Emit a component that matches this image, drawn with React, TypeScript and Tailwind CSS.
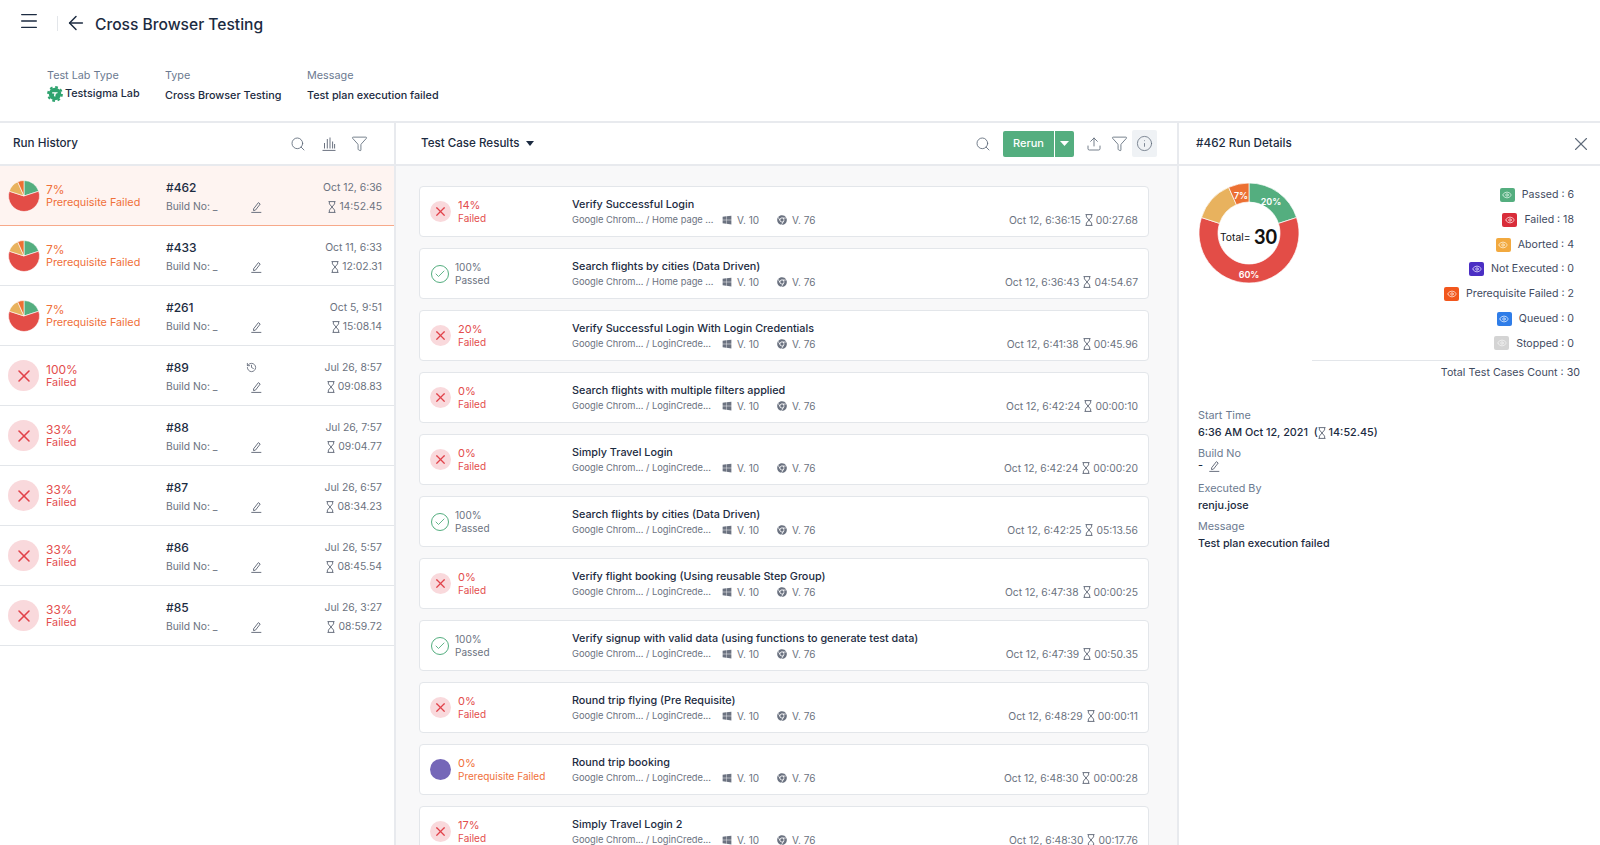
import { ArrowLeft, Eye, Filter, History, Info, Menu, Search, Upload, X, Check } from "lucide-react"
import { FaChrome, FaWindows } from "react-icons/fa"

type Slice = { from: number, to: number, color: string }

const slices: Slice[] = [
    { from: 0, to: 72, color: "#54ae7f" },
    { from: 72, to: 288, color: "#e34d47" },
    { from: 288, to: 336, color: "#e8b25e" },
    { from: 336, to: 360, color: "#ec7032" },
]

function point(cx: number, cy: number, r: number, deg: number) {
    const a = (deg - 90) * Math.PI / 180
    return `${(cx + r * Math.cos(a)).toFixed(2)} ${(cy + r * Math.sin(a)).toFixed(2)}`
}

function Pie() {
    return (
        <svg width="32" height="32" viewBox="0 0 32 32" className="shrink-0">
            {slices.map((s) => (
                <path key={s.from} fill={s.color} stroke="#fff" strokeWidth="0.6"
                    d={`M16 16 L${point(16, 16, 15.5, s.from)} A15.5 15.5 0 ${s.to - s.from > 180 ? 1 : 0} 1 ${point(16, 16, 15.5, s.to)} Z`} />
            ))}
        </svg>
    )
}

function Donut() {
    const arc = (s: Slice) => {
        const big = s.to - s.from > 180 ? 1 : 0
        return `M${point(51, 51, 50, s.from)} A50 50 0 ${big} 1 ${point(51, 51, 50, s.to)} L${point(51, 51, 31, s.to)} A31 31 0 ${big} 0 ${point(51, 51, 31, s.from)} Z`
    }
    return (
        <svg width="102" height="102" viewBox="0 0 102 102" className="shrink-0">
            {slices.map((s) => <path key={s.from} d={arc(s)} fill={s.color} stroke="#fff" strokeWidth="0.7" />)}
            <g fontFamily="Inter, sans-serif" fontSize="9" fontWeight="600" fill="#fff" textAnchor="middle">
                <text x="73" y="23">20%</text>
                <text x="51" y="96">60%</text>
                <text x="43" y="17">7%</text>
            </g>
            <text x="22" y="59" fontFamily="Inter, sans-serif" fontSize="10.3" fill="#111">Total=</text>
            <text x="56" y="62" fontFamily="Lato, sans-serif" fontSize="20" fontWeight="700" fill="#111">30</text>
        </svg>
    )
}

function Hourglass({ className = "text-[#6b7280]" }: { className?: string }) {
    return (
        <svg width="8" height="12" viewBox="0 0 8 12" fill="none" stroke="currentColor" strokeWidth="1" className={`shrink-0 ${className}`}>
            <path d="M.5.6h7M.5 11.4h7M1.4.6v2.3L4 6l2.6-3.1V.6M1.4 11.4V9.1L4 6l2.6 3.1v2.3" />
        </svg>
    )
}

function Pencil() {
    return (
        <svg width="11" height="12" viewBox="0 0 11 12" fill="none" stroke="#6b7280" strokeWidth="1" className="shrink-0">
            <path d="M2.6 7.8 7.4 1.6l1.8 1.4-4.7 6.1-2 .5z" />
            <path d="M.3 11.4h10" />
        </svg>
    )
}

function LogoGear() {
    return (
        <svg width="16" height="16" viewBox="0 0 16 16" className="shrink-0">
            <circle cx="8" cy="8" r="6.2" fill="#2fa36f" />
            <circle cx="8" cy="8" r="6.9" fill="none" stroke="#2fa36f" strokeWidth="2" strokeDasharray="2.71 2.71" />
            <path fill="#fff" d="M5.2 6.2h5.6l-.7 1.4H8.9L8.1 11 6.9 9.7l.5-2.1H5.2z" />
        </svg>
    )
}

function BarsIcon() {
    return (
        <svg width="14" height="14" viewBox="0 0 14 14" fill="none" stroke="#6b7280" strokeWidth="1">
            <path d="M.5 13.4h13M2.5 11.5V6M5.3 11.5V2M8 11.5V.5M10.6 11.5V4.5M12.6 11.5V7" />
        </svg>
    )
}

function Failed({ size, icon }: { size: string, icon: number }) {
    return (
        <div className={`${size} shrink-0 rounded-full bg-[#f9d9dc] flex items-center justify-center`}>
            <X size={icon} strokeWidth={1.9} className="text-[#e1424a]" />
        </div>
    )
}

type Run = { pct: string, status: "pre" | "fail", id: string, date: string, time: string, restored?: boolean }

const runs: Run[] = [
    { pct: "7%", status: "pre", id: "#462", date: "Oct 12, 6:36", time: "14:52.45" },
    { pct: "7%", status: "pre", id: "#433", date: "Oct 11, 6:33", time: "12:02.31" },
    { pct: "7%", status: "pre", id: "#261", date: "Oct 5, 9:51", time: "15:08.14" },
    { pct: "100%", status: "fail", id: "#89", date: "Jul 26, 8:57", time: "09:08.83", restored: true },
    { pct: "33%", status: "fail", id: "#88", date: "Jul 26, 7:57", time: "09:04.77" },
    { pct: "33%", status: "fail", id: "#87", date: "Jul 26, 6:57", time: "08:34.23" },
    { pct: "33%", status: "fail", id: "#86", date: "Jul 26, 5:57", time: "08:45.54" },
    { pct: "33%", status: "fail", id: "#85", date: "Jul 26, 3:27", time: "08:59.72" },
]

type Case = { pct: string, status: "fail" | "pass" | "pre", title: string, page: string, date: string, time: string }

const cases: Case[] = [
    { pct: "14%", status: "fail", title: "Verify Successful Login", page: "Home page ...", date: "Oct 12, 6:36:15", time: "00:27.68" },
    { pct: "100%", status: "pass", title: "Search flights by cities (Data Driven)", page: "Home page ...", date: "Oct 12, 6:36:43", time: "04:54.67" },
    { pct: "20%", status: "fail", title: "Verify Successful Login With Login Credentials", page: "LoginCrede...", date: "Oct 12, 6:41:38", time: "00:45.96" },
    { pct: "0%", status: "fail", title: "Search flights with multiple filters applied", page: "LoginCrede...", date: "Oct 12, 6:42:24", time: "00:00:10" },
    { pct: "0%", status: "fail", title: "Simply Travel Login", page: "LoginCrede...", date: "Oct 12, 6:42:24", time: "00:00:20" },
    { pct: "100%", status: "pass", title: "Search flights by cities (Data Driven)", page: "LoginCrede...", date: "Oct 12, 6:42:25", time: "05:13.56" },
    { pct: "0%", status: "fail", title: "Verify flight booking (Using reusable Step Group)", page: "LoginCrede...", date: "Oct 12, 6:47:38", time: "00:00:25" },
    { pct: "100%", status: "pass", title: "Verify signup with valid data (using functions to generate test data)", page: "LoginCrede...", date: "Oct 12, 6:47:39", time: "00:50.35" },
    { pct: "0%", status: "fail", title: "Round trip flying (Pre Requisite)", page: "LoginCrede...", date: "Oct 12, 6:48:29", time: "00:00:11" },
    { pct: "0%", status: "pre", title: "Round trip booking", page: "LoginCrede...", date: "Oct 12, 6:48:30", time: "00:00:28" },
    { pct: "17%", status: "fail", title: "Simply Travel Login 2", page: "LoginCrede...", date: "Oct 12, 6:48:30", time: "00:17.76" },
]

const legend = [
    { label: "Passed : 6", color: "bg-[#54ae7f]", eye: "text-[#d5efe1]" },
    { label: "Failed : 18", color: "bg-[#d92d3a]", eye: "text-[#fbdcdc]" },
    { label: "Aborted : 4", color: "bg-[#f2a93f]", eye: "text-[#fdeccd]" },
    { label: "Not Executed : 0", color: "bg-[#4b2fc4]", eye: "text-[#dcd6fa]" },
    { label: "Prerequisite Failed : 2", color: "bg-[#f2571d]", eye: "text-[#fde0d2]" },
    { label: "Queued : 0", color: "bg-[#2f7de8]", eye: "text-[#d8e8fd]" },
    { label: "Stopped : 0", color: "bg-[#d4d4d4]", eye: "text-[#f0f0f0]" },
]

function RunRow({ run, active }: { run: Run, active: boolean }) {
    const color = run.status === "pre" ? "text-[#f0703a]" : "text-[#e34d4d]"
    return (
        <div className={`h-[60px] flex items-center pl-2 pr-[12px] border-b ${active ? "bg-[#fef4f1] border-[#f7a98a]" : "border-[#e3e6ea]"}`}>
            {run.status === "pre" ? <Pie /> : <Failed size="w-[31px] h-[31px] mr-px" icon={20} />}
            <div className={`w-[120px] ml-[6px] text-[10.8px] leading-[13px] ${color}`}>
                <div className="text-[12px]">{run.pct}</div>
                <div>{run.status === "pre" ? "Prerequisite Failed" : "Failed"}</div>
            </div>
            <div className="w-[101px]">
                <div className="flex items-center h-[23px] text-[12px] font-medium text-[#1c2b41]">
                    <span className="w-[80px]">{run.id}</span>
                    {run.restored && <History size={11} className="text-[#6b7280]" />}
                </div>
                <div className="flex items-center text-[10.3px] text-[#6b7280]">
                    <span className="w-[85px]">Build No: _</span>
                    <Pencil />
                </div>
            </div>
            <div className="flex-1 flex flex-col items-end text-[10.4px] text-[#6b7280]">
                <div className="h-[23px] flex items-center">{run.date}</div>
                <div className="flex items-center gap-[3px]"><Hourglass />{run.time}</div>
            </div>
        </div>
    )
}

function CaseCard({ item }: { item: Case }) {
    const color = item.status === "fail" ? "text-[#e34d4d]" : item.status === "pre" ? "text-[#f0703a]" : "text-[#6b7280]"
    const label = item.status === "fail" ? "Failed" : item.status === "pre" ? "Prerequisite Failed" : "Passed"
    return (
        <div className="h-[51px] shrink-0 bg-white border border-[#e3e6ea] rounded-[4px] flex items-center px-[10px]">
            <div className="w-[142px] flex items-center shrink-0">
                {item.status === "fail" && <Failed size="w-[21px] h-[21px] mr-[7px]" icon={15} />}
                {item.status === "pre" && <div className="w-[21px] h-[21px] mr-[7px] rounded-full bg-[#7567b8]" />}
                {item.status === "pass" && (
                    <div className="w-[18px] h-[18px] ml-[1px] mr-[6px] rounded-full border-[1.5px] border-[#54ae7f] flex items-center justify-center">
                        <Check size={12} strokeWidth={1.8} className="text-[#54ae7f]" />
                    </div>
                )}
                <div className={`${item.status === "pass" ? "text-[10px]" : "text-[11px]"} leading-[13px] ${color}`}>
                    <div>{item.pct}</div>
                    <div className="text-[10px]">{label}</div>
                </div>
            </div>
            <div className="flex-1 min-w-0">
                <div className="text-[10.8px] leading-[16px] font-medium text-[#1c2b41] whitespace-nowrap">{item.title}</div>
                <div className="flex items-center text-[10px] leading-[14px] text-[#6b7280] whitespace-nowrap">
                    <span className="w-[74px] text-[9.3px]">Google Chrom...</span>
                    <span className="w-[76px] text-[9.3px]">/ {item.page}</span>
                    <FaWindows size={10} className="mr-[5px] text-[#6b7280]" />
                    <span className="w-[40px]">V. 10</span>
                    <FaChrome size={10} className="mr-[5px] text-[#6b7280]" />
                    <span>V. 76</span>
                    <span className="ml-auto text-[10.3px]">{item.date}</span>
                    <span className="ml-[4px] flex items-center gap-[3px] text-[10.3px]"><Hourglass />{item.time}</span>
                </div>
            </div>
        </div>
    )
}

function Field({ label, children, tight }: { label: string, children: React.ReactNode, tight?: boolean }) {
    return (
        <div>
            <div className="text-[10.8px] leading-[16px] text-[#6b7a90]">{label}</div>
            <div className={`text-[10.8px] leading-[16px] font-medium text-[#1c2b41] ${tight ? "-mt-[2px] mb-[3px]" : "mt-px"}`}>{children}</div>
        </div>
    )
}

export default function App() {
    return (
        <div className="h-screen overflow-hidden bg-white flex flex-col font-['Inter',sans-serif] text-[#1c2b41]">
            <header className="h-[50px] shrink-0 flex items-center pl-[18px] pb-[2px]">
                <Menu size={22} strokeWidth={1.4} className="-mt-[6px]" />
                <div className="w-px h-[15px] bg-[#e3e6ea] ml-[17px] mr-[7px] -mt-[2px]" />
                <ArrowLeft size={22} strokeWidth={1.6} className="-mt-[2px]" />
                <h1 className="ml-[8px] mt-[2px] text-[15.6px] font-medium">Cross Browser Testing</h1>
            </header>
            <div className="h-[73px] shrink-0 flex pl-[47px] pt-[18px] text-[10.8px] border-b-2 border-[#e8eaee]">
                <div className="w-[118px]">
                    <div className="leading-[16px] text-[#6b7a90]">Test Lab Type</div>
                    <div className="flex items-center gap-[2px] mt-[2px] font-medium">
                        <LogoGear />Testsigma Lab
                    </div>
                </div>
                <div className="w-[142px]">
                    <div className="leading-[16px] text-[#6b7a90]">Type</div>
                    <div className="mt-[4px] font-medium">Cross Browser Testing</div>
                </div>
                <div>
                    <div className="leading-[16px] text-[#6b7a90]">Message</div>
                    <div className="mt-[4px] font-medium">Test plan execution failed</div>
                </div>
            </div>
            <div className="flex-1 min-h-0 flex">
                <aside className="w-[396px] shrink-0 border-r-2 border-[#e8eaee]">
                    <div className="h-[43px] flex items-center pl-[13px] pr-[26px] border-b-2 border-[#e8eaee]">
                        <span className="text-[11.7px] font-medium">Run History</span>
                        <Search size={16} strokeWidth={1.3} className="ml-auto text-[#5f6b7a]" />
                        <div className="ml-[16px]"><BarsIcon /></div>
                        <Filter size={17} strokeWidth={1.2} className="ml-[15px] text-[#5f6b7a]" />
                    </div>
                    {runs.map((run, i) => <RunRow key={run.id} run={run} active={i === 0} />)}
                </aside>
                <main className="w-[783px] shrink-0 flex flex-col border-r-2 border-[#e8eaee]">
                    <div className="h-[43px] shrink-0 flex items-center pl-[25px] pr-[20px] border-b-2 border-[#e8eaee]">
                        <span className="text-[11.6px] font-medium">Test Case Results</span>
                        <svg width="8" height="5" viewBox="0 0 8 5" className="ml-[6px]"><path d="M0 0h8L4 5z" fill="#1c2b41" /></svg>
                        <Search size={16} strokeWidth={1.3} className="ml-auto mr-[12px] text-[#5f6b7a]" />
                        <button className="w-[51px] h-[26px] bg-[#54ae7f] rounded-l-[2px] text-white text-[11px] font-medium">Rerun</button>
                        <button className="w-[19px] h-[26px] ml-px bg-[#54ae7f] rounded-r-[2px] flex items-center justify-center">
                            <svg width="9" height="5" viewBox="0 0 9 5"><path d="M0 0h9L4.5 5z" fill="#fff" /></svg>
                        </button>
                        <Upload size={16} strokeWidth={1.3} className="ml-[12px] text-[#5f6b7a]" />
                        <Filter size={17} strokeWidth={1.2} className="ml-[9px] text-[#5f6b7a]" />
                        <div className="w-[25px] h-[27px] ml-[4px] bg-[#eff2f5] rounded-[2px] flex items-center justify-center">
                            <Info size={17} strokeWidth={1.1} className="text-[#5f6b7a]" />
                        </div>
                    </div>
                    <div className="flex-1 min-h-0 overflow-hidden bg-[#f8f8f9] flex flex-col gap-[11px] pt-[20px] pl-[23px] pr-[28px]">
                        {cases.map((item, i) => <CaseCard key={i} item={item} />)}
                    </div>
                </main>
                <section className="flex-1 min-w-0 flex flex-col">
                    <div className="h-[43px] shrink-0 flex items-center pl-[17px] pr-[8px] border-b-2 border-[#e8eaee]">
                        <span className="text-[11.7px] font-medium">#462 Run Details</span>
                        <X size={22} strokeWidth={1.2} className="ml-auto text-[#5f6b7a]" />
                    </div>
                    <div className="flex pl-[19px] pr-[20px] pt-[16px]">
                        <Donut />
                        <div className="flex-1 flex flex-col items-end mt-px">
                            {legend.map((row) => (
                                <div key={row.label} className="h-[24.7px] mr-[6px] flex items-center gap-[7px] text-[10.6px] text-[#3f4b5f]">
                                    <span className={`w-[15px] h-[14px] rounded-[2px] flex items-center justify-center ${row.color}`}>
                                        <Eye size={10} className={row.eye} />
                                    </span>
                                    {row.label}
                                </div>
                            ))}
                            <div className="w-[268px] mt-[4px] border-t border-[#e3e6ea] pt-[4px] text-right text-[10.7px] text-[#3f4b5f]">Total Test Cases Count : 30</div>
                        </div>
                    </div>
                    <div className="pl-[19px] pt-[27px] flex flex-col gap-[5px]">
                        <Field label="Start Time">
                            <span className="flex items-center">6:36 AM Oct 12, 2021&nbsp;&nbsp;(<Hourglass />&nbsp;14:52.45)</span>
                        </Field>
                        <Field label="Build No" tight>
                            <span className="flex items-center h-[13px] gap-[6px]">- <Pencil /></span>
                        </Field>
                        <Field label="Executed By">renju.jose</Field>
                        <Field label="Message">Test plan execution failed</Field>
                    </div>
                </section>
            </div>
        </div>
    )
}
